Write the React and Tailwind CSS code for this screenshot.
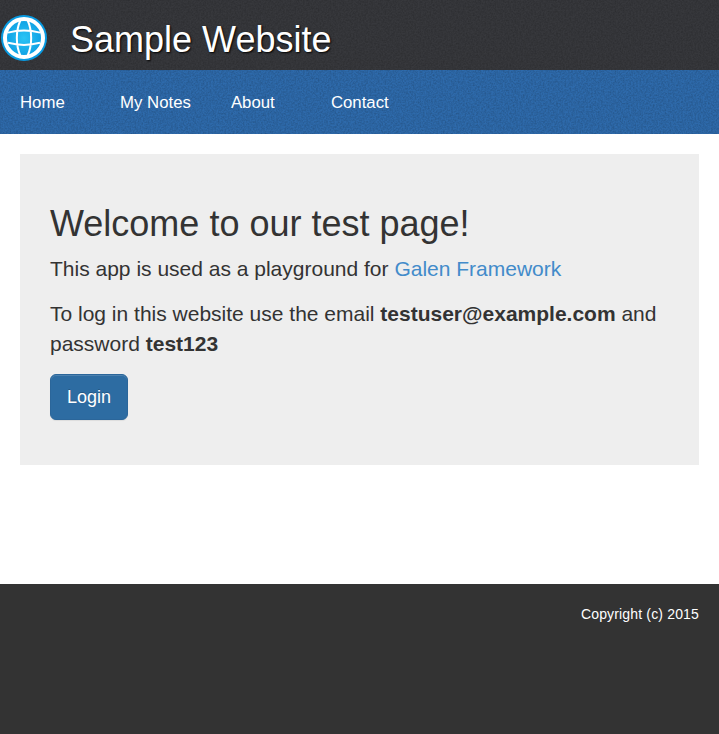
const navItems = ['Home', 'My Notes', 'About', 'Contact'];

function Grain({ id }) {
  return (
    <svg className="pointer-events-none absolute inset-0 h-full w-full" aria-hidden="true">
      <filter id={id} x="0" y="0" width="100%" height="100%">
        <feTurbulence type="fractalNoise" baseFrequency="0.6" numOctaves="2" seed="4" />
        <feColorMatrix type="matrix" values="0 0 0 0 0  0 0 0 0 0  0 0 0 0 0  0.8 0 0 0 -0.26" />
      </filter>
      <rect width="100%" height="100%" filter={`url(#${id})`} opacity="0.4" />
    </svg>
  );
}

function Logo() {
  return (
    <svg className="h-12 w-12" viewBox="0 0 48 48" aria-hidden="true">
      <defs>
        <radialGradient id="globe">
          <stop offset="0" stopColor="#2cc4f5" />
          <stop offset="1" stopColor="#0798e0" />
        </radialGradient>
      </defs>
      <circle cx="24" cy="24" r="23" fill="url(#globe)" />
      <g fill="none" stroke="#fff">
        <circle cx="24" cy="24" r="19" strokeWidth="4" />
        <path strokeWidth="2" d="M20.5 6C15.6 17 15.6 31 20.5 42M27.5 6C32.4 17 32.4 31 27.5 42M8 18.6C18 16 30 16 40 18.6M8 28.8C18 31.4 30 31.4 40 28.8" />
      </g>
    </svg>
  );
}

export default function App() {
  return (
    <div className="flex min-h-screen flex-col bg-white font-['Liberation_Sans',Arial,sans-serif] text-[#333]">
      <header className="relative flex h-[70px] items-start bg-[#37383c]">
        <Grain id="header-grain" />
        <div className="relative flex pt-[14px]">
          <Logo />
          <h1 className="ml-[22px] mt-[6px] text-[36px] leading-10 text-white [text-shadow:1px_1px_2px_#000]">
            Sample Website
          </h1>
        </div>
      </header>
      <nav className="relative h-16 bg-[#2e6aab]">
        <Grain id="nav-grain" />
        <ul className="relative flex h-full items-center pt-0.5">
          {navItems.map((item) => (
            <li key={item} className="min-w-[100px] px-5 text-[16.8px] leading-6 text-white">
              <a href="#">{item}</a>
            </li>
          ))}
        </ul>
      </nav>
      <main className="grow p-5">
        <section className="h-[311px] bg-[#eee] px-[30px] pt-[50px]">
          <h2 className="text-[36px] leading-10">Welcome to our test page!</h2>
          <p className="mt-[10px] text-[21px] leading-[30px]">
            This app is used as a playground for <a href="#" className="text-[#428bca]">Galen Framework</a>
          </p>
          <p className="mt-[15px] text-[21px] leading-[30px]">
            To log in this website use the email <b>testuser@example.com</b> and password <b>test123</b>
          </p>
          <button className="mt-[15px] block h-[46px] w-[78px] rounded-[6px] border border-[#2b669a] bg-[#2d6ca2] text-[18px] leading-6 text-white shadow-[inset_0_1px_0_rgba(255,255,255,0.15),0_1px_1px_rgba(0,0,0,0.075)] [text-shadow:0_-1px_0_rgba(0,0,0,0.2)]">
            Login
          </button>
        </section>
      </main>
      <footer className="h-[150px] bg-[#333] p-5 text-right text-[14px] leading-5 tracking-[0.16px] text-white">
        Copyright (c) 2015
      </footer>
    </div>
  );
}
